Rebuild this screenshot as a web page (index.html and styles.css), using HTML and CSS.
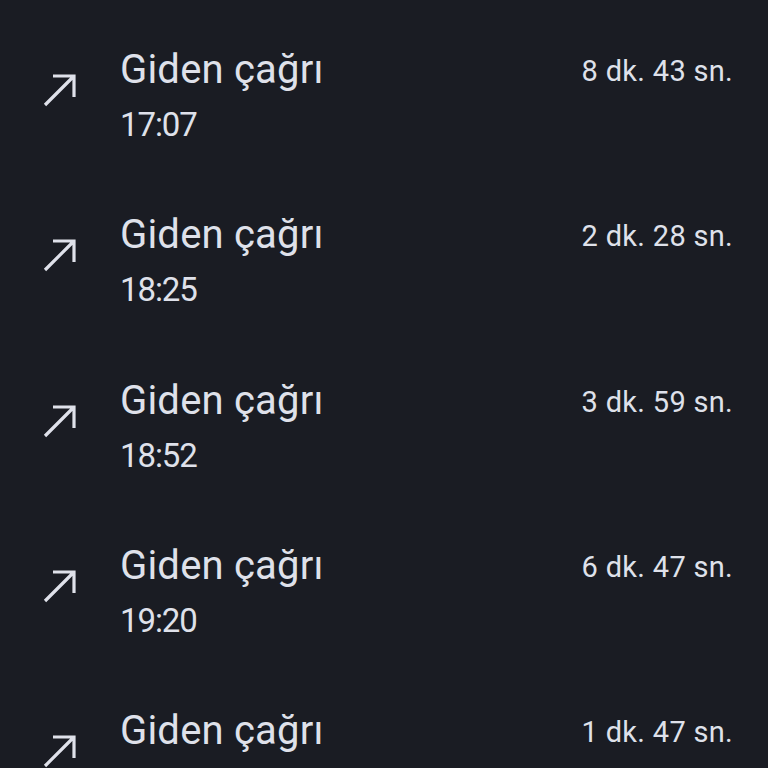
FILE: index.html
```html
<!doctype html>
<html>
<head>
<meta charset="utf-8">
<title>Arama geçmişi</title>
<link rel="stylesheet" href="styles.css">
</head>
<body>
<ul class="calls">
	<li class="call">
		<svg class="dir" viewBox="0 0 34 34"><path d="M3 32 L31 4 M11 3 H32 V24"/></svg>
		<div class="info">
			<div class="kind">Giden çağrı</div>
			<div class="time">17:07</div>
		</div>
		<div class="dur">8 dk. 43 sn.</div>
	</li>
	<li class="call">
		<svg class="dir" viewBox="0 0 34 34"><path d="M3 32 L31 4 M11 3 H32 V24"/></svg>
		<div class="info">
			<div class="kind">Giden çağrı</div>
			<div class="time">18:25</div>
		</div>
		<div class="dur">2 dk. 28 sn.</div>
	</li>
	<li class="call">
		<svg class="dir" viewBox="0 0 34 34"><path d="M3 32 L31 4 M11 3 H32 V24"/></svg>
		<div class="info">
			<div class="kind">Giden çağrı</div>
			<div class="time">18:52</div>
		</div>
		<div class="dur">3 dk. 59 sn.</div>
	</li>
	<li class="call">
		<svg class="dir" viewBox="0 0 34 34"><path d="M3 32 L31 4 M11 3 H32 V24"/></svg>
		<div class="info">
			<div class="kind">Giden çağrı</div>
			<div class="time">19:20</div>
		</div>
		<div class="dur">6 dk. 47 sn.</div>
	</li>
	<li class="call">
		<svg class="dir" viewBox="0 0 34 34"><path d="M3 32 L31 4 M11 3 H32 V24"/></svg>
		<div class="info">
			<div class="kind">Giden çağrı</div>
		</div>
		<div class="dur">1 dk. 47 sn.</div>
	</li>
</ul>
</body>
</html>
```
FILE: styles.css
```css
html, body {
	margin: 0;
	height: 100%;
	background: #1a1c23;
	overflow: hidden;
}
.calls {
	list-style: none;
	margin: 0;
	padding: 42px 35px 0 0;
	font-family: Roboto, "Noto Sans", sans-serif;
	color: #dfe1ea;
}
.call {
	display: flex;
	align-items: flex-start;
	height: 165.25px;
}
.dir {
	width: 34px;
	height: 34px;
	margin: 31px 44px 0 42px;
	fill: none;
	stroke: #dfe1ea;
	stroke-width: 3.2;
	stroke-linecap: butt;
}
.info {
	flex: 1;
}
.kind {
	font-size: 40px;
	line-height: 55px;
	letter-spacing: 0.2px;
}
.time {
	font-size: 33px;
	line-height: 55px;
	letter-spacing: -1.1px;
}
.dur {
	font-size: 29px;
	line-height: 55px;
	margin-top: 2px;
	letter-spacing: 0.3px;
}
```
